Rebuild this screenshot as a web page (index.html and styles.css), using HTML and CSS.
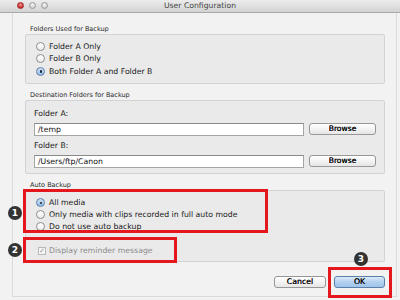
FILE: index.html
```html
<!DOCTYPE html>
<html>
<head>
<meta charset="utf-8">
<link rel="stylesheet" href="styles.css">
</head>
<body>
<div class="window">
  <div class="titlebar">
    <div class="lights">
      <span class="light red"></span>
      <span class="light gray"></span>
      <span class="light gray"></span>
    </div>
    <div class="title">User Configuration</div>
  </div>
  <div class="content">
    <div class="group-label">Folders Used for Backup</div>
    <div class="group g1">
      <div class="radio-row"><span class="radio"></span><span>Folder A Only</span></div>
      <div class="radio-row"><span class="radio"></span><span>Folder B Only</span></div>
      <div class="radio-row"><span class="radio checked"></span><span>Both Folder A and Folder B</span></div>
    </div>

    <div class="group-label">Destination Folders for Backup</div>
    <div class="group g2">
      <div class="field-label">Folder A:</div>
      <div class="field-row first">
        <div class="input">/temp</div>
        <div class="btn">Browse</div>
      </div>
      <div class="field-label second">Folder B:</div>
      <div class="field-row">
        <div class="input">/Users/ftp/Canon</div>
        <div class="btn">Browse</div>
      </div>
    </div>

    <div class="group-label">Auto Backup</div>
    <div class="group g3">
      <div class="radio-row tight"><span class="radio checked"></span><span>All media</span></div>
      <div class="radio-row tight"><span class="radio"></span><span>Only media with clips recorded in full auto mode</span></div>
      <div class="radio-row tight"><span class="radio"></span><span>Do not use auto backup</span></div>
      <div class="check-row"><span class="check">&#10003;</span><span>Display reminder message</span></div>
    </div>

    <div class="actions">
      <div class="btn cancel">Cancel</div>
      <div class="btn ok">OK</div>
    </div>
  </div>

  <div class="hl hl1"></div>
  <div class="hl hl2"></div>
  <div class="hl hl3"></div>
  <div class="badge b1">1</div>
  <div class="badge b2">2</div>
  <div class="badge b3">3</div>
</div>
</body>
</html>
```
FILE: styles.css
```css
html, body {
  margin: 0;
  padding: 0;
}
body {
  width: 400px;
  height: 300px;
  overflow: hidden;
  background: #f1f1f1;
  font-family: "DejaVu Sans", "Liberation Sans", sans-serif;
  color: #1a1a1a;
}
.window {
  position: relative;
  width: 400px;
  height: 300px;
  background: #f2f2f2;
}
.titlebar {
  position: relative;
  height: 12px;
  border-bottom: 1px solid #a9a9a9;
  background: linear-gradient(#ececec, #d3d3d3);
  display: flex;
  align-items: center;
  justify-content: center;
}
.lights {
  position: absolute;
  left: 17px;
  top: 2px;
  display: flex;
  gap: 5px;
}
.light {
  width: 7px;
  height: 7px;
  border-radius: 50%;
  box-sizing: border-box;
}
.light.red {
  background: radial-gradient(circle at 50% 35%, #f4a0a0, #d2332f 60%, #a51f1c);
  border: 0.5px solid #9c2a27;
}
.light.gray {
  background: radial-gradient(circle at 50% 35%, #f8f8f8, #cfcfcf 70%);
  border: 0.5px solid #9c9c9c;
}
.title {
  font-size: 7.7px;
  color: #444;
  line-height: 12px;
}
.content {
  margin: 0 3px 0 12px;
  height: 284px;
  box-sizing: border-box;
  border: 1px solid #dadada;
  border-top: none;
  padding: 12px 11px 0 12px;
}
.group-label {
  font-size: 6.5px;
  line-height: 8px;
  color: #2a2a2a;
  padding-left: 5px;
  height: 8px;
}
.group {
  margin-top: 1px;
  background: #eaeaea;
  border: 1px solid #d3d3d3;
  border-radius: 2px;
  margin-bottom: 7px;
  font-size: 7.75px;
}
.g1 {
  padding: 5px 10px 5px;
}
.radio-row {
  display: flex;
  align-items: center;
  height: 12.5px;
  gap: 4px;
}
.radio-row.tight {
  height: 12px;
}
.radio {
  width: 9px;
  height: 9px;
  box-sizing: border-box;
  border-radius: 50%;
  border: 1px solid #8d8d8d;
  background: linear-gradient(#ffffff, #ececec);
  position: relative;
  flex: none;
}
.radio.checked {
  border-color: #5f7fa8;
  background: linear-gradient(#cfe1f4, #92bde6);
}
.radio.checked::after {
  content: "";
  position: absolute;
  left: 2.5px;
  top: 2.5px;
  width: 2.5px;
  height: 2.5px;
  border-radius: 50%;
  background: #1b2533;
}
.g2 {
  padding: 6px 8px 5px 8px;
}
.field-label {
  height: 14px;
  line-height: 14px;
}
.field-label.second {
  margin-top: 3px;
}
.field-row {
  display: flex;
  align-items: center;
  gap: 5px;
  margin-top: 2px;
}
.field-row.first {
  margin-top: 2px;
}
.input {
  width: 270px;
  height: 13px;
  box-sizing: border-box;
  background: #fff;
  border: 1px solid #a5a5a5;
  border-top-color: #8a8a8a;
  line-height: 11px;
  padding-left: 3px;
  color: #111;
}
.btn {
  height: 12px;
  box-sizing: border-box;
  border: 1px solid #979797;
  border-radius: 3px;
  background: linear-gradient(#ffffff, #f3f3f3 50%, #e6e6e6);
  font-size: 7.6px;
  line-height: 10px;
  text-align: center;
  color: #111;
  width: 67px;
  text-shadow: 0 0 0.3px #000;
}
.g3 {
  padding: 6px 10px 5px;
  height: 72px;
  box-sizing: border-box;
}
.check-row {
  display: flex;
  align-items: center;
  gap: 3px;
  height: 12px;
  margin-top: 12px;
  color: #8c8c8c;
}
.check {
  width: 8px;
  height: 8px;
  box-sizing: border-box;
  border: 1px solid #b9b9b9;
  background: #f4f4f4;
  margin-left: 2px;
  font-size: 7px;
  line-height: 7px;
  text-align: center;
  color: #9a9a9a;
  flex: none;
}
.actions {
  display: flex;
  justify-content: flex-end;
  gap: 8px;
  margin-top: 14px;
}
.btn.cancel {
  width: 52px;
  font-size: 7.75px;
}
.btn.ok {
  width: 51px;
  font-size: 7.75px;
  border-color: #5d7ea9;
  background: linear-gradient(#dbeaf8, #b3d1ef 50%, #9ec4ea);
}
.hl {
  position: absolute;
  box-sizing: border-box;
  border: 3px solid #e3171c;
}
.hl1 { left: 23px; top: 189px; width: 245px; height: 44px; }
.hl2 { left: 23px; top: 237px; width: 154px; height: 26px; }
.hl3 { left: 328px; top: 267px; width: 64px; height: 31px; }
.badge {
  position: absolute;
  width: 14px;
  height: 14px;
  border-radius: 50%;
  background: #333;
  color: #fff;
  font-family: "DejaVu Sans", sans-serif;
  font-weight: bold;
  font-size: 9px;
  line-height: 14px;
  text-align: center;
}
.b1 { left: 8px; top: 206px; }
.b2 { left: 8px; top: 243px; }
.b3 { left: 354px; top: 252px; }
```
